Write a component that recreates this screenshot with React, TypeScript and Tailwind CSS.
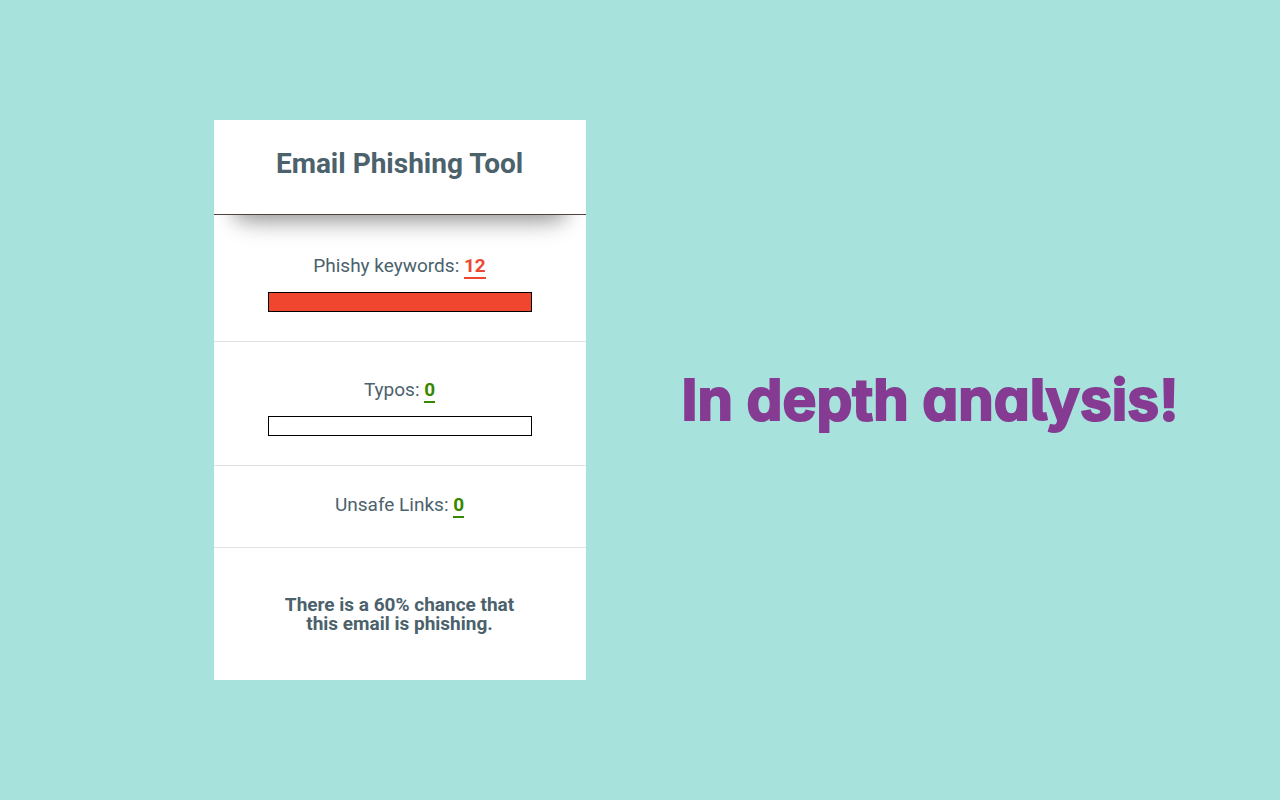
import type { ReactNode } from "react";
import clsx from "clsx";

type StatProps = {
  label: string;
  value: number;
  percent?: number;
  className?: string;
};

function Stat({ label, value, percent, className }: StatProps) {
  return (
    <section className={clsx("border-b border-[#e2e2e2] px-[54px] text-center", className)}>
      <p className="text-[19px] leading-6">
        {label}:{" "}
        <span
          className={clsx(
            "inline-block border-b-2 font-bold leading-[22px]",
            value > 0 ? "border-[#ef4630] text-[#ef4630]" : "border-[#388700] text-[#388700]"
          )}
        >
          {value}
        </span>
      </p>
      {percent !== undefined && (
        <div
          role="progressbar"
          aria-label={label}
          aria-valuenow={percent}
          className="mt-[13px] h-5 border border-black bg-white"
        >
          <div className="h-full bg-[#f04630]" style={{ width: `${percent}%` }} />
        </div>
      )}
    </section>
  );
}

function Card({ children }: { children: ReactNode }) {
  return (
    <main className="w-[372px] shrink-0 bg-white font-[Roboto,sans-serif] text-[#4b616b]">
      {children}
    </main>
  );
}

export default function App() {
  return (
    <div className="flex min-h-screen flex-wrap items-center justify-center gap-24 bg-[#a7e3dc] pl-28">
      <Card>
        {/* Header */}
        <header className="relative z-10 border-b border-[#51443f] bg-white pt-7 pb-[34px] text-center shadow-[0_24px_20px_-20px_rgba(0,0,0,0.35),0_36px_28px_-28px_rgba(0,0,0,0.15)]">
          <h1 className="text-[28px] leading-8 font-bold">Email Phishing Tool</h1>
        </header>

        {/* Results */}
        <Stat label="Phishy keywords" value={12} percent={100} className="pt-[39px] pb-[29px]" />
        <Stat label="Typos" value={0} percent={0} className="pt-9 pb-[29px]" />
        <Stat label="Unsafe Links" value={0} className="pt-[27px] pb-[29px]" />

        <p className="px-16 py-[47px] text-center text-[19px] leading-[19px] font-bold">
          There is a 60% chance that this email is phishing.
        </p>
      </Card>

      <h2 className="font-[Inter,sans-serif] text-[57px] leading-[72px] font-bold text-[#863b93] [font-feature-settings:'cv11','cv05'] [-webkit-text-stroke:2px_#863b93]">
        In depth analysis!
      </h2>
    </div>
  );
}
